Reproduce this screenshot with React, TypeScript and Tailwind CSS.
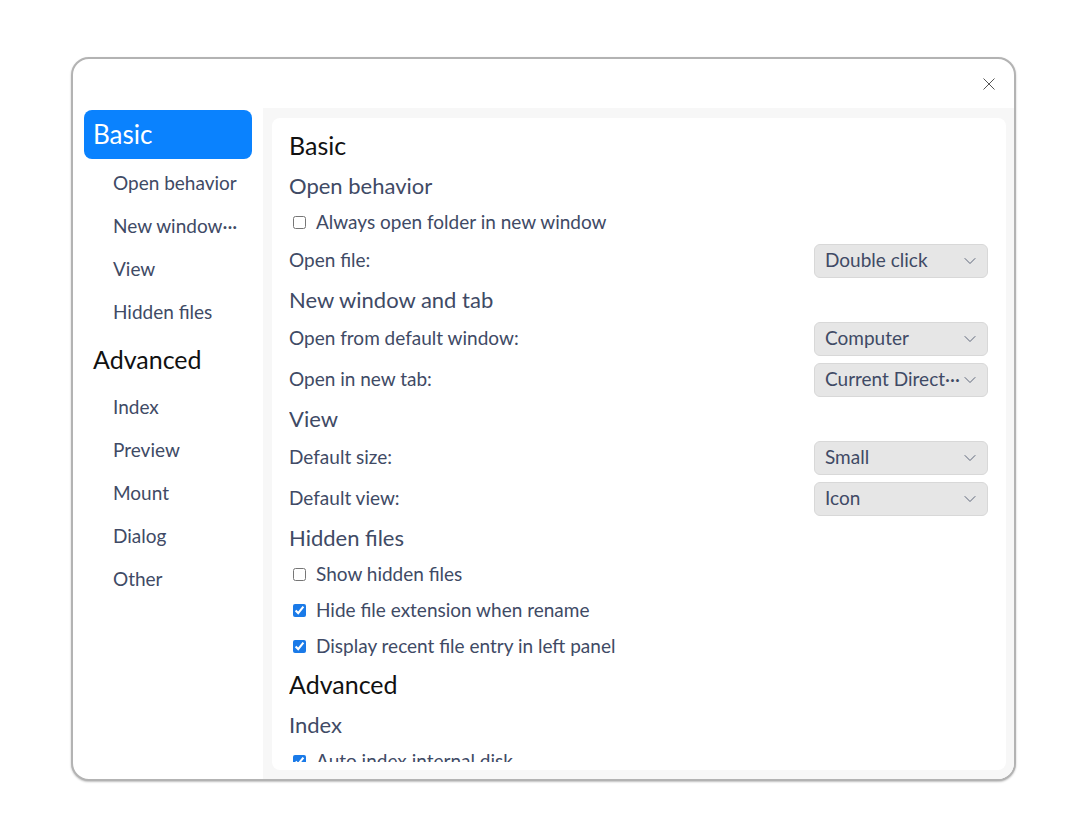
import { ChevronDown } from 'lucide-react';

const FONT = { fontFamily: 'Lato, "Noto Sans", sans-serif' };

type Row =
  | { kind: 'title'; text: string }
  | { kind: 'section'; text: string }
  | { kind: 'check'; text: string; checked: boolean }
  | { kind: 'select'; label: string; value: string };

const rows: Row[] = [
  { kind: 'title', text: 'Basic' },
  { kind: 'section', text: 'Open behavior' },
  { kind: 'check', text: 'Always open folder in new window', checked: false },
  { kind: 'select', label: 'Open file:', value: 'Double click' },
  { kind: 'section', text: 'New window and tab' },
  { kind: 'select', label: 'Open from default window:', value: 'Computer' },
  { kind: 'select', label: 'Open in new tab:', value: 'Current Direct···' },
  { kind: 'section', text: 'View' },
  { kind: 'select', label: 'Default size:', value: 'Small' },
  { kind: 'select', label: 'Default view:', value: 'Icon' },
  { kind: 'section', text: 'Hidden files' },
  { kind: 'check', text: 'Show hidden files', checked: false },
  { kind: 'check', text: 'Hide file extension when rename', checked: true },
  { kind: 'check', text: 'Display recent file entry in left panel', checked: true },
  { kind: 'title', text: 'Advanced' },
  { kind: 'section', text: 'Index' },
  { kind: 'check', text: 'Auto index internal disk', checked: true },
  { kind: 'check', text: 'Index external storage device after connected to computer', checked: false },
];

const navGroups = [
  { title: 'Basic', items: ['Open behavior', 'New window···', 'View', 'Hidden files'] },
  { title: 'Advanced', items: ['Index', 'Preview', 'Mount', 'Dialog', 'Other'] },
];

function Select({ value }: { value: string }) {
  return (
    <div className="flex items-center justify-between w-[174px] h-[34px] pl-[10px] pr-[7px] bg-[#e6e6e6] border border-[#d8d8d8] rounded-[6px] text-[19px] text-[#404a65]">
      <span className="whitespace-nowrap">{value}</span>
      <ChevronDown size={20} strokeWidth={1.1} className="text-[#505a70] shrink-0" />
    </div>
  );
}

function SettingRow({ row }: { row: Row }) {
  switch (row.kind) {
    case 'title':
      return (
        <div className="h-[42px] shrink-0 flex items-center text-[25px] text-[#111111]">{row.text}</div>
      );
    case 'section':
      return (
        <div className="h-[37px] shrink-0 flex items-center text-[22px] text-[#404a65]">{row.text}</div>
      );
    case 'check':
      return (
        <label className="h-[36px] shrink-0 flex items-center text-[19px] text-[#404a65] whitespace-nowrap">
          <input
            type="checkbox"
            defaultChecked={row.checked}
            className="ml-[4px] mr-[10px] w-[13px] h-[13px] accent-[#1a7ae8]"
          />
          {row.text}
        </label>
      );
    case 'select':
      return (
        <div className="h-[41px] shrink-0 flex items-center justify-between text-[19px] text-[#404a65]">
          <span>{row.label}</span>
          <Select value={row.value} />
        </div>
      );
  }
}

export default function App() {
  return (
    <div className="min-h-[832px] bg-white" style={FONT}>
      <div className="ml-[71px] pt-[57px]">
        <div className="w-[945px] h-[724px] flex flex-col bg-white border-2 border-[#b3b3b3] rounded-[18px] overflow-hidden shadow-[0_1px_2px_rgba(0,0,0,0.25)]">
          {/* Title bar */}
          <div className="h-[49px] shrink-0 flex items-center justify-end pr-[19px]">
            <button className="w-[12px] h-[12px] flex items-center justify-center text-[#555]" aria-label="Close">
              <svg width="12" height="12" viewBox="0 0 12 12" fill="none" stroke="currentColor" strokeWidth="1">
                <path d="M0.5 0.5 L11.5 11.5 M11.5 0.5 L0.5 11.5" />
              </svg>
            </button>
          </div>

          <div className="flex flex-1 min-h-0">
            {/* Sidebar */}
            <nav className="w-[190px] shrink-0 px-[11px] pt-[2px]">
              {navGroups.map((group, gi) => (
                <div key={group.title}>
                  {gi === 0 ? (
                    <div className="h-[49px] mb-[3px] flex items-center pl-[9px] rounded-[8px] bg-[#0a82fe] text-white text-[26px]">
                      {group.title}
                    </div>
                  ) : (
                    <div className="h-[52px] flex items-center pl-[9px] text-[25px] text-[#111111]">
                      {group.title}
                    </div>
                  )}
                  {group.items.map((item) => (
                    <div
                      key={item}
                      className="h-[43px] flex items-center pl-[29px] text-[19px] text-[#404a65] whitespace-nowrap"
                    >
                      {item}
                    </div>
                  ))}
                </div>
              ))}
            </nav>

            {/* Content */}
            <div className="flex-1 min-w-0 bg-[#f7f7f7] pt-[10px] pl-[9px] pr-[8px] pb-[9px] flex">
              <div className="flex-1 flex flex-col bg-white rounded-[8px] pl-[17px] pr-[18px] pt-[7px] pb-[8px]">
                <div className="flex-1 min-h-0 flex flex-col overflow-hidden">
                  {rows.map((row, i) => (
                    <SettingRow key={i} row={row} />
                  ))}
                </div>
              </div>
            </div>
          </div>
        </div>
      </div>
    </div>
  );
}
